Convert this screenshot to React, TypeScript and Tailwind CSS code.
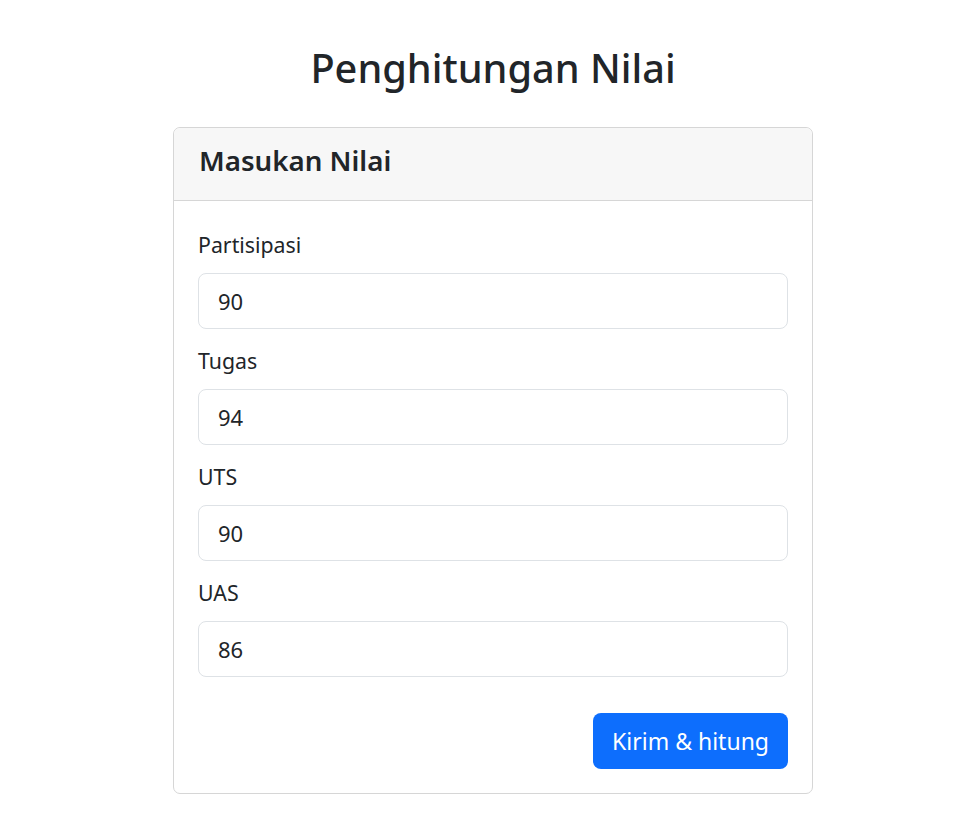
export default function App() {
  const fields = [
    { label: "Partisipasi", value: "90" },
    { label: "Tugas", value: "94" },
    { label: "UTS", value: "90" },
    { label: "UAS", value: "86" },
  ];
  return (
    <div
      className="min-h-screen w-full bg-white text-[#212529]"
      style={{ fontFamily: '"Noto Sans", "Open Sans", sans-serif' }}
    >
      <div className="ml-[173px] w-[640px] pt-[44px]">
        <h1 className="mb-[35px] text-center text-[39.7px] font-medium leading-[48px]">
          Penghitungan Nilai
        </h1>
        <div className="rounded-[7px] border border-[#d6d6d6] bg-white">
          <div className="rounded-t-[7px] border-b border-[#d6d6d6] bg-[#f7f7f7] px-[25px] pb-[23px] pt-[15px]">
            <h4 className="text-[27.7px] font-semibold leading-[34px]">Masukan Nilai</h4>
          </div>
          <div className="px-[24px] pb-[24px] pt-[29px]">
            {fields.map((f) => (
              <div key={f.label} className="mb-[17px]">
                <label className="mb-[13px] block text-[21.3px] leading-[30px]">{f.label}</label>
                <input
                  readOnly
                  value={f.value}
                  className="block h-[56px] w-full rounded-[8px] border border-[#dee2e6] px-[19px] text-[22px] text-[#212529] outline-none"
                />
              </div>
            ))}
            <div className="flex justify-end pt-[19px]">
              <button className="h-[56px] rounded-[8px] bg-[#0d6efd] px-[19px] text-[23px] text-white">
                Kirim &amp; hitung
              </button>
            </div>
          </div>
        </div>
      </div>
    </div>
  );
}
